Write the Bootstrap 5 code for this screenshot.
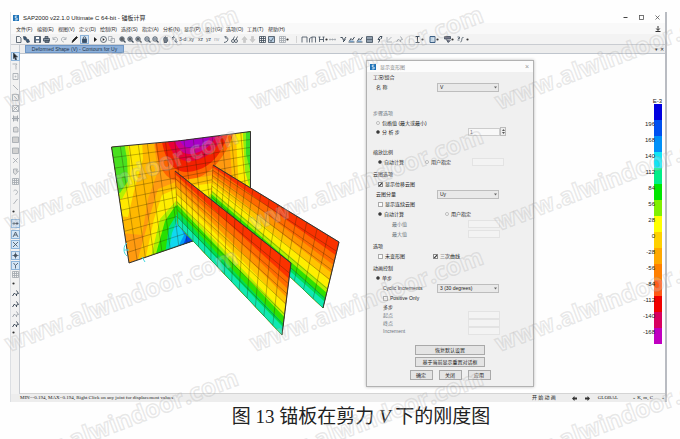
<!DOCTYPE html>
<html lang="zh-CN">
<head>
<meta charset="utf-8">
<meta name="viewport" content="width=device-width, initial-scale=1">
<title>SAP2000 - 锚板计算</title>
<link href="https://cdn.jsdelivr.net/npm/bootstrap@5.3.0/dist/css/bootstrap.min.css" rel="stylesheet">
<style>
body{font-family:"Liberation Sans","Noto Sans CJK SC",sans-serif;font-size:5px;line-height:8px;color:#222;background:#fefefe;overflow-x:hidden}
button,input,select{font:inherit;color:inherit}
.wrap{padding-top:12px}
.app{margin:0 13px 0 10px;border-right:2px solid #b9bcc2;border-left:1px solid #dcdfe3}
.titlebar{height:11px;font-size:6px;padding-left:2px}
.titlebar svg{width:6px;height:6px}
.win-btn{border:0;background:none;padding:0;width:16px;line-height:8px;display:flex;justify-content:center}
.win-btn svg{width:5px;height:5px}
.menus{height:11px;background:#f9f9f9;padding-left:5px}
.menus a{width:21px;color:#333;text-decoration:none;white-space:nowrap}
.menus svg{width:6px;height:6px}
.tools{height:11px;background:#f3f3f3;padding-left:4px;border-bottom:1px solid #c9ccd1}
.tool{border:0;background:none;padding:0;text-align:left;flex:none;line-height:7px;color:#3c4650;white-space:nowrap;display:block}
.tool svg{width:7px;height:7px;display:block}
.tool.held svg{background:#d5e6f6;outline:1px solid #8db4da}
.faded{opacity:.45}
.palette{width:9px;background:#f2f2f2;border-right:1px solid #c8ccd2;padding-top:6px}
.palette .tool{width:8px;padding-left:1px}
.tabstrip{height:9px;background:#ededed;border-bottom:1px solid #bfc5cd;padding-left:5px}
.tabstrip a{width:99px;background:#8db0da;border:1px solid #6f97c6;color:#22344c;text-decoration:none;line-height:7px;height:8px}
.tabstrip button{border:0;background:none;padding:0;width:6px;line-height:7px}
.view{background:#fefefe;padding:6px 0;border-bottom:1px solid #d4d4d4}
.model{width:250px;height:220px;margin:65px 0 0 80px;display:block}
.dlg{width:168px;background:#f0f0f0;border:1px solid #b2b2b2;box-shadow:0 0 3px #bbb;margin-left:16px;padding-bottom:6px}
.dlg-head{height:11px;background:#fcfcfc;padding:0 4px 0 3px;color:#888}
.dlg-head svg{width:6px;height:6px}
.dlg-head button{border:0;background:none;padding:0;color:#999;font-size:7px;line-height:8px}
.dlg form{padding-left:6px}
.grp{min-width:0}
.grp legend{float:none;font-size:5px;line-height:10px;height:10px;margin:0;color:#222}
.gap-s{margin-top:2px}.gap-m{margin-top:11px}
.btns{gap:2px;padding-top:10px}
.trio{gap:6px;margin-top:1px}
.line{height:10px;display:flex;align-items:center;line-height:8px}
.line.tight{height:9px}.line.thin{height:8px}
.line label{display:flex;align-items:center;gap:2px;white-space:nowrap}
.c47{width:47px}.c55{width:55px}.c64{width:64px}.c67{width:67px}.c95{width:95px}
.in1{padding-left:3px}.in2{padding-left:5px}.in3{padding-left:10px}.in4{padding-left:19px}
.line input[type=radio],.line input[type=checkbox]{appearance:none;flex:none;width:5px;height:5px;margin:0;border:1px solid #aaa;background:#fcfcfc}
.line input[type=radio]{width:4px;height:4px;border-radius:50%;border-color:#bbb}
.line input[type=radio]:checked{background:#222;border-color:#777}
.line input[type=checkbox]:checked{border-color:#888;background:linear-gradient(135deg,#fff 30%,#444 45%,#444 60%,#fff 75%)}
.line select{appearance:none;width:62px;height:9px;line-height:7px;padding:0 2px;border:1px solid #bdbdbd;border-radius:0;background:#e9e9e9}
.pick{display:grid;align-items:center}
.pick>*{grid-area:1/1}
.pick svg{width:3px;height:3px;justify-self:end;margin-right:2px}
.line input[type=text]{width:32px;height:8px;padding:0 1px;border:1px solid #e3e3e3;background:#f3f3f3;line-height:6px}
.line input[type=text].live{border-color:#ccc;background:#f8f8f8;color:#777}
.spin{width:6px;height:9px;border:1px solid #bbb;display:flex;flex-direction:column;background:#eee}
.spin button{border:0;padding:0;background:none;height:4px;line-height:0;display:flex;justify-content:center;align-items:center}
.spin svg{width:3px;height:2px}
.dlg-btn{border:1px solid #a9a9a9;background:#e4e4e4;padding:0;height:10px;line-height:8px;width:23px;color:#222}
.dlg-btn.wide{width:70px}
.scale-key{width:20px;margin:44px 3px 0 0}
.scale-key li{display:flex;height:16px}
.scale-key b{flex:1;font-weight:400;font-size:6px;line-height:8px;text-align:right;white-space:nowrap;margin-right:-1px;z-index:1}
.scale-key i{width:8px;order:2}
.scale-key .unit{font-size:6px;line-height:6px;height:6px;margin-top:-6px;justify-content:flex-end}
.status{height:8px;background:#ededed;padding-left:9px;font-family:"Liberation Serif","Noto Sans CJK SC",serif;color:#222}
.status .msg{white-space:nowrap}
.status .cell{width:35px;text-align:right;white-space:nowrap}
.status svg{width:5px;height:5px}
.caption-line{font:19px/26px "Liberation Serif","Noto Sans CJK SC",serif;color:#222;margin:2px 0 0;padding-left:42px;white-space:nowrap}
.stamp{position:absolute;inset:0;width:100%;height:100%;pointer-events:none}
.stamp text{font:700 24px "Open Sans",sans-serif;fill:#fff;fill-opacity:.2;stroke:#999;stroke-opacity:.22;stroke-width:1.5px}
</style>
<script src="https://cdn.jsdelivr.net/npm/bootstrap@5.3.0/dist/js/bootstrap.bundle.min.js"></script>
</head>
<body class="position-relative min-vh-100">
<svg class="d-none" aria-hidden="true">
 <defs>
  <g id="app"><rect width="16" height="16" fill="#1e73b8"/><path d="M11 3H6v5h5v5H5" fill="none" stroke="#fff" stroke-width="2"/></g>
 </defs>
</svg>
<div class="wrap">
<main class="app">
 <header class="titlebar d-flex align-items-center">
  <svg viewBox="0 0 16 16"><use href="#app"/></svg>
  <span class="ms-1 flex-grow-1">SAP2000 v22.1.0 Ultimate C 64-bit - 锚板计算</span>
  <button class="win-btn" aria-label="最小化"><svg viewBox="0 0 10 10"><path d="M1 5h8" stroke="#444" stroke-width="2"/></svg></button>
  <button class="win-btn" aria-label="最大化"><svg viewBox="0 0 10 10"><rect x="1" y="1" width="8" height="8" fill="none" stroke="#555" stroke-width="1.6"/></svg></button>
  <button class="win-btn" aria-label="关闭"><svg viewBox="0 0 10 10"><path d="M1 1l8 8M9 1L1 9" stroke="#444" stroke-width="1.4"/></svg></button>
 </header>
 <nav class="menus d-flex align-items-center">
  <a href="#">文件(F)</a><a href="#">编辑(E)</a><a href="#">视图(V)</a><a href="#">定义(D)</a><a href="#">绘制(R)</a><a href="#">选择(S)</a><a href="#">指定(A)</a><a href="#">分析(N)</a><a href="#">显示(P)</a><a href="#">设计(G)</a><a href="#">选项(O)</a><a href="#">工具(T)</a><a href="#">帮助(H)</a>
  <svg class="ms-auto me-1" viewBox="0 0 12 12"><path d="M6 0v8M2.500 5L6 9l3.500-4M1 11h10" fill="none" stroke="#333" stroke-width="2"/></svg>
 </nav>
 <div class="tools d-flex align-items-center" id="tools"></div>
 <div class="d-flex">
  <div class="palette d-flex flex-column flex-shrink-0" id="palette"></div>
  <section class="flex-grow-1">
   <div class="tabstrip d-flex">
    <a href="#" class="text-center">Deformed Shape (V) - Contours for Uy</a>
    <button class="ms-auto" aria-label="列表">▾</button><button aria-label="关闭视图">✕</button>
   </div>
   <div class="view d-flex align-items-start">
    <svg class="model flex-shrink-0" id="model" viewBox="100 126 250 220" role="img" aria-label="锚板位移云图"></svg>
    <div class="dlg flex-shrink-0">
     <div class="dlg-head d-flex align-items-center"><svg viewBox="0 0 16 16"><use href="#app"/></svg><span class="ms-1 flex-grow-1">显示变形图</span><button aria-label="关闭">×</button></div>
     <form>
      <fieldset class="grp"><legend>工况/组合</legend>
       <div class="line"><label for="cs" class="c64 in1">名 称</label><span class="pick"><select id="cs"><option>V</option></select><svg viewBox="0 0 6 4"><path d="M0 0h6L3 4z" fill="#666"/></svg></span></div>
      </fieldset>
      <fieldset class="grp mt-3"><legend class="text-secondary">步骤选项</legend>
       <div class="line tight in1"><label><input type="radio" name="st">包络值 (最大或最小)</label></div>
       <div class="line tight"><label class="c95 in1"><input type="radio" name="st" checked>分 析 步</label><input class="live" type="text" value="1" aria-label="分析步"><span class="spin"><button type="button" aria-label="增加"><svg viewBox="0 0 6 4"><path d="M0 4h6L3 0z" fill="#555"/></svg></button><button type="button" aria-label="减少"><svg viewBox="0 0 6 4"><path d="M0 0h6L3 4z" fill="#555"/></svg></button></span></div>
      </fieldset>
      <fieldset class="grp gap-m"><legend>缩放比例</legend>
       <div class="line in2"><label class="c47"><input type="radio" name="sc" checked>自动计算</label><label class="c47 flex-shrink-0"><input type="radio" name="sc">用户指定</label><input type="text" aria-label="缩放比例"></div>
      </fieldset>
      <fieldset class="grp gap-s"><legend>云图选项</legend>
       <div class="line in2"><label><input type="checkbox" checked>显示位移云图</label></div>
       <div class="line"><label for="cp" class="c64 in1">云图分量</label><span class="pick"><select id="cp"><option>Uy</option></select><svg viewBox="0 0 6 4"><path d="M0 0h6L3 4z" fill="#666"/></svg></span></div>
       <div class="line in2"><label><input type="checkbox">显示连续云图</label></div>
       <div class="line in2"><label class="c67"><input type="radio" name="ct" checked>自动计算</label><label><input type="radio" name="ct">用户指定</label></div>
       <div class="line text-secondary"><label for="mn" class="c95 in4">最小值</label><input id="mn" type="text"></div>
       <div class="line text-secondary"><label for="mx" class="c95 in4">最大值</label><input id="mx" type="text"></div>
      </fieldset>
      <fieldset class="grp gap-s"><legend>选项</legend>
       <div class="line in2"><label class="c55"><input type="checkbox">未变形图</label><label><input type="checkbox" checked>三次曲线</label></div>
      </fieldset>
      <fieldset class="grp gap-s"><legend>动画控制</legend>
       <div class="line in1"><label><input type="radio" name="an" checked>单步</label></div>
       <div class="line"><label for="ci" class="c64 in3">Cyclic Increments</label><span class="pick"><select id="ci"><option>3 (30 degrees)</option></select><svg viewBox="0 0 6 4"><path d="M0 0h6L3 4z" fill="#666"/></svg></span></div>
       <div class="line in3"><label><input type="checkbox">Positive Only</label></div>
       <div class="line thin in3"><span>多步</span></div>
       <div class="line thin text-secondary"><label for="s0" class="c95 in3">起点</label><input id="s0" type="text"></div>
       <div class="line thin text-secondary"><label for="s1" class="c95 in3">终点</label><input id="s1" type="text"></div>
       <div class="line thin text-secondary"><label for="s2" class="c95 in3">Increment</label><input id="s2" type="text"></div>
      </fieldset>
     </form>
     <div class="d-flex flex-column align-items-center btns">
      <button class="dlg-btn wide">恢复默认设置</button>
      <button class="dlg-btn wide">基于当前显示重置对话框</button>
      <div class="d-flex trio"><button class="dlg-btn">确定</button><button class="dlg-btn">关闭</button><button class="dlg-btn">应用</button></div>
     </div>
    </div>
    <ul class="scale-key list-unstyled ms-auto" id="key"></ul>
   </div>
  </section>
 </div>
 <footer class="status d-flex align-items-center">
  <span class="msg flex-grow-1">MIN=-0.194, MAX=0.194, Right Click on any joint for displacement values</span>
  <span class="cell me-3">开 始 动 画</span>
  <svg class="me-2" viewBox="0 0 10 10"><path d="M5 0L0 5l5 5V7h5V3H5z" fill="#333"/></svg><svg viewBox="0 0 10 10"><path d="M5 0l5 5-5 5V7H0V3h5z" fill="#333"/></svg>
  <span class="ms-1 ps-1">GLOBAL</span><span class="cell">⌄ K, m, C</span><span class="ms-2">⌄</span>
 </footer>
</main>
<p class="caption-line text-center">图 13 锚板在剪力 <em>V</em> 下的刚度图</p>
</div>
<svg class="stamp" id="stamp" aria-hidden="true"></svg>
<script>
const svg=b=>`<svg viewBox="0 0 14 14" fill="none" stroke="#3f4c5a" stroke-width="1.600">${b}</svg>`;
const mag=x=>`<circle cx="6" cy="6" r="4.500" fill="#c9d3dc"/><path d="M9 9l4 4" stroke-width="2.500"/>${x}`;
const I={
 doc:'<path d="M3 1h6l3 3v9H3z"/>',open:'<path d="M1 1l5 1 1 4 4 1 2 5-5 1-2-5-4-1z" fill="#36587a"/>',
 save:'<path d="M1 1h12v12H1z" fill="#5a6f86"/><path d="M4 2h6v4H4zM4 9h6v4H4z" fill="#fff" stroke="none"/>',
 print:'<path d="M4 1h6v4H4zM1 5h12v5H1zM4 9h8v4H4z" fill="#8795a3"/>',
 undo:'<path d="M3 6c2-5 9-4 8 2-1 3-3 4-5 4M2 2v5h5"/>',redo:'<path d="M11 6C9 1 2 2 3 8c1 3 3 4 5 4M12 2v5H7"/>',
 pen:'<path d="M2 13l2-5 7-7 2 2-7 7z" fill="#222" stroke="#222"/>',lock:'<path d="M3 6h8v7H3z" fill="#34506e"/><path d="M4.500 6V4a2.500 2.500 0 015 0v2"/>',
 play:'<path d="M4 2l6 5-6 5z" fill="#222" stroke="none"/>',run:'<circle cx="7" cy="7" r="6"/><path d="M5.500 4l4 3-4 3z" fill="#222" stroke="none"/>',
 pages:'<path d="M1 1h7v8H1zM6 5h7v8H6z"/>',z0:mag('<path d="M4 4h4v4H4z" stroke="#222"/>'),z1:mag('<path d="M3 6h6M6 3v6" stroke="#222"/>'),z2:mag('<path d="M3 6h6"/>'),
 hand:'<path d="M3 6l2-4 1 4 1-5 1 5 2-4 1 8-3 4H5z" fill="#75808c"/>',walk:'<path d="M2 4l3-3 2 3M4 2v6M7 9l3 4 3-2M10 5v7"/>',
 arc:'<path d="M4 1c8 1 8 11-2 12M3 1l4 5"/>',glass:'<circle cx="4" cy="10" r="3"/><circle cx="10" cy="10" r="3"/><path d="M4 7l3-6M10 7l3-6"/>',
 up:'<path d="M7 1L2 7h3v6h4V7h3z" fill="#999" stroke="#999"/>',dn:'<path d="M7 13L2 7h3V1h4v6h3z" fill="#999" stroke="#999"/>',
 grid:'<path d="M1 1h12v12H1zM1 5h12M1 9h12M5 1v12M9 1v12"/>',chk:'<path d="M1 1h12v12H1z" fill="#b8cfe4"/><path d="M3 7l3 4 5-8"/>',
 frame:'<path d="M2 13V2h10v11"/>',frame2:'<path d="M1 13V5l5-3h7v11M6 2v11"/>',hh:'<path d="M1 2h4M3 2v10M9 2h4M11 2v10M3 7h8"/>',
 beam:'<path d="M0 7h14M2 5v4M7 5v4M12 5v4"/>',bend:'<path d="M1 3h4l2 6 5-7M6 12l5-5" stroke-width="2"/>',load:'<path d="M1 12h12M3 10l3-5 3 3 4-6" stroke-width="2"/><path d="M3 9h8v3H3z" fill="#739ac0" stroke="none"/>',
 box:'<path d="M1 1h12v12H1z" fill="#c8d8e6"/><path d="M1 4h12M1 7h12M1 10h12"/>',bolt:'<path d="M8 1L4 7h4l-3 6M8 1h4l-2 5" stroke-width="2"/>',
 ln:'<path d="M2 2v10h10M4 9l7-7"/>',ib:'<path d="M3 1h8M3 13h8M7 1v12" stroke-width="2"/>',sq:'<path d="M2 1h10v12H2z" fill="#c9def0" stroke="#3b5f85" stroke-width="2"/>',
 ms:'<path d="M1 1h12v5H1zM5 7l3 6 5-4" fill="#777788"/>',jf:'<path d="M1 2h4v3H2M1 8h4M13 3c-5-2-2 9-6 9"/>',dot:'<circle cx="3" cy="7" r="2.200" fill="#333" stroke="none"/>',
 sep:'<path d="M3 0v14" stroke="#ccc"/>',
 ptr:'<path d="M3 0l8 8H7l2 5-2 1-2-5-2 2z" fill="#222"/>',tt:'<path d="M1 2h9l-3 4M8 6v7"/>',pt:'<path d="M2 1h10v12H2z"/><circle cx="7" cy="7" r="1"/>',
 diag:'<path d="M2 2l10 10"/>',dbox:'<path d="M1 1h12v12H1zM3 3l8 8"/>',xbox:'<path d="M1 1h12v12H1zM1 1l12 12M13 1L1 13"/>',
 hbox:'<path d="M3 1v12M11 1v12M3 4h8M3 10h8M0 7h14" stroke-width="2"/>',area:'<path d="M3 3l7-1 2 3v7H3z" fill="#bbb"/>',fill:'<path d="M1 2h12v11H1z" fill="#aaa"/>',
 xx:'<path d="M2 2l9 9M12 2L2 12"/>',clip:'<path d="M3 2h8l-3 4h5l-6 7-4-3z" fill="#ccc"/>',hook:'<path d="M3 4c3-4 9-1 8 3l-4 5"/>',slash:'<path d="M11 2L3 12"/>',
 snap:'<path d="M1 7h12M4 4v6M10 4v6"/>',tri:'<path d="M2 12l5-10 5 10M4 8h6"/>',pl:'<path d="M7 1v12M1 7h12M5 5h4v4H5z"/>',yy:'<path d="M3 2l4 5M12 2L7 7v6"/>',
 cur:'<path d="M1 12l4-6 2 3M9 1l4 6-4 1v4" stroke-width="2"/>'
};
const bar=[['doc',8],['open',11],['save',9],['print',9],['undo',8,1],['redo',11,1],['pen',10],['lock',11,2],['play',8],['run',8],['pages',11,1],['z0',8],['z1',8],['z1',9],['z2',8],['z2',10],['hand',9],['walk',8],['=3-d',10],['=xy',9],['=xz',8],['=yz',8],['=nv',9,1],['arc',8],['glass',10],['up',8,1],['dn',10,1],['grid',9],['chk',11],['grid',7,1],['dot',9],['sep',6],['frame',8],['frame2',9],['hh',7],['dot',4],['beam',11,1],['bend',8],['load',8],['load',10],['box',10],['bolt',10],['ln',10,1],['cur',12,1],['sep',6],['ib',7],['dot',8],['sq',7],['dot',8],['ms',7],['dot',6],['jf',9],['dot',6]];
const cell=([n,s,f],dim)=>`<button class="tool ${f==1?'faded':f==2?'held':''}" aria-label="${n.replace('=','')}" style="${dim}:${s}px">${n[0]=='='?n.slice(1):svg(I[n])}</button>`;
tools.innerHTML=bar.map(b=>cell(b,'width')).join('');
const side=[['ptr',10,2],['tt',10,1],['pt',11,1],['diag',10,1],['dbox',11,1],['xbox',10,1],['hbox',11,1],['area',10,1],['fill',11,1],['fill',10,1],['xx',11,1],['clip',10,1],['grid',11,1],['hook',10,1],['slash',8,1],['dot',13],['snap',11,2],['tri',10,2],['xx',11,2],['pl',10,2],['yy',10,2],['grid',8,1],['dot',10],['cur',11],['cur',10],['cur',11,1],['cur',8],['dot',9]];
palette.innerHTML=side.map(b=>cell(b,'height')).join('');

const C=['#0000e0','#0050f0','#0090f8','#10e4f4','#00ee88','#00e600','#80f000','#ffff00','#ffd000','#ffa800','#ff8000','#ff5a18','#f00000','#d80060','#c000c0'];
key.innerHTML='<li class="unit">E-3</li>'+C.map((c,i)=>`<li><i style="background:${c}"></i><b>${i?224-28*i:''}</b></li>`).join('');

const lerp=(a,b,t)=>[a[0]+(b[0]-a[0])*t,a[1]+(b[1]-a[1])*t];
const poly=(p,c)=>`<polygon points="${p.map(q=>q.map(n=>n.toFixed(1)).join()).join(' ')}" fill="${c}"/>`;
const line=(a,b)=>`M${a[0].toFixed(1)} ${a[1].toFixed(1)}L${b[0].toFixed(1)} ${b[1].toFixed(1)}`;
function mesh(q,nu,nv,k){
 let d='';
 for(let i=0;i<=nu;i++){let t=i/nu;t=t*(1-k)+t*t*k;d+=line(lerp(q[0],q[1],t),lerp(q[3],q[2],t))}
 for(let j=0;j<=nv;j++)d+=line(lerp(q[0],q[3],j/nv),lerp(q[1],q[2],j/nv));
 return `<path d="${d}" fill="none" stroke="#2a2200" stroke-opacity=".5" stroke-width=".6"/>`;
}
function fin(q,L,R){
 const cs=['#fa3200','#ff6a00','#ff9400','#ffc400','#ffee00','#b4f000','#30e000','#00e050','#10e8b0'];
 let s='';
 cs.forEach((c,i)=>s+=poly([lerp(q[0],q[3],L[i]),lerp(q[1],q[2],R[i]),lerp(q[1],q[2],1),lerp(q[0],q[3],1)],c));
 return s+mesh(q,15,7,.35)+`<path d="${line(q[0],q[1])+line(q[1],q[2])}" stroke="#333" fill="none"/>`;
}
const plate='M111.500 148Q180 143 250.500 132.500V192L193 242 129 264Z';
const f=(d,c)=>`<path d="${d}" fill="${c}"/>`;
const P=[[111.5,148],[250.5,132.5],[257,219],[129,264]];
model.innerHTML=`<clipPath id="pc"><path d="${plate}"/></clipPath><g clip-path="url(#pc)">`
 +f('M100 120h160v150H100z','#ff9a10')
 +f('M100 120h50L158 172 148 200 142 236 100 232z','#ffb800')
 +f('M100 120h41L143 160 134 192 128 218 100 215z','#ffe800')
 +f('M100 120h24L130 160 130 185 122 200H100z','#b8f000')
 +f('M100 120h20L127 160 128 182 120 194H100z','#48e020')
 +f('M228 120h30v90H234z','#ffc000')+f('M235 120h30v90H240z','#ffee00')+f('M242 120h20v70H250L245 172z','#90ee10')+f('M246 120h20v55H251L246 155z','#38dc28')
 +f('M152 120C156 164 162 180 178 182 200 184 226 168 238 120z','#ff6400')
 +f('M159 120C162 158 170 172 186 173 208 172 224 158 232 120z','#f42000')
 +f('M163 120C168 154 176 163 192 162 208 160 222 148 228 120z','#e80038')
 +f('M169 120C174 150 182 156 192 155 206 152 217 144 222 120z','#cc0090')
 +f('M174 120C178 148 186 150 193 149 204 148 212 142 216 120z','#a800c8')
 +f('M138 260L150 216 158 190 178 182 214 176 220 260z','#ffc000')
 +f('M145 262L154 220 162 196 178 189 213 184 220 260z','#ffee00')
 +f('M150 262L160 220 176 202 196 212 213 192 220 260z','#b0f000')
 +f('M154 262L165 222 176 206 196 220 213 197 220 260z','#28e000')
 +f('M164 262L169 228 177 215 190 220 213 205 220 260z','#00e488')
 +f('M168 256L172 234 178 219 200 240z','#10d8f0')+f('M174 256L184 236 179 224 200 240z','#0098f8')+f('M180 254L187 236 182 230 200 242z','#0048e8')
 +mesh(P,15,11,.05)+'</g>'
 +`<path d="M129 264L111.500 148Q180 143 250.500 132.500V190M129 264L193 242" fill="none" stroke="#333"/>`
 +`<path d="M127 244c-4 3-4 10 0 13M124 251h5M142 258l3 5" fill="none" stroke="#40d8e0"/>`
 +fin([[213,166],[339,243],[323,309],[211,203]],[0,.06,.22,.36,.5,.68,.78,.9,1],[0,.2,.35,.47,.58,.7,.77,.85,.9])
 +fin([[175,172],[291,264],[282,336],[178,226]],[0,.06,.16,.28,.42,.54,.62,.74,.86],[0,.22,.36,.48,.58,.7,.75,.84,.89]);

let w='';
for(let r=0;r<4;r++)for(let c=0;c<3;c++)w+=`<text transform="translate(${9+c*245} ${110+r*121}) rotate(-21)">www.alwindoor.com</text>`;
stamp.innerHTML=w;
</script>
</body>
</html>
